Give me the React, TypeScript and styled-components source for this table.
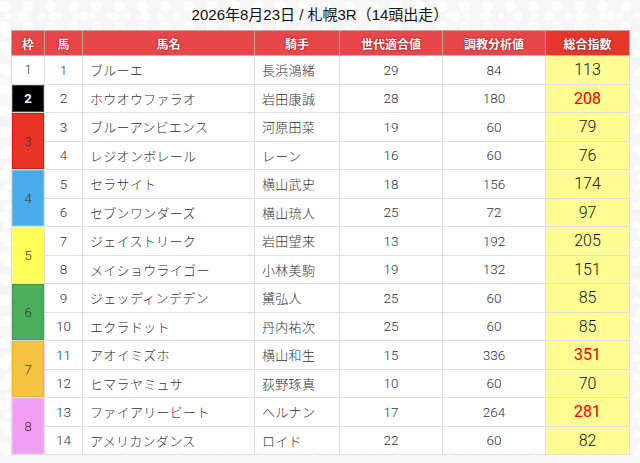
import styled, { createGlobalStyle } from "styled-components";

const GlobalStyle = createGlobalStyle`
    html, body {
        margin: 0;
        padding: 0;
    }
    body {
        background-color: #f6f6f6;
        background-image:
            radial-gradient(circle at 20% 30%, #ffffff 0 5px, transparent 6px),
            radial-gradient(circle at 70% 60%, #ffffff 0 4px, transparent 5px),
            radial-gradient(circle at 45% 85%, #ffffff 0 3px, transparent 4px);
        background-size: 23px 21px, 31px 27px, 17px 19px;
        font-family: "Liberation Sans", "Noto Sans CJK JP", sans-serif;
        color: #333;
    }
`;

const Page = styled.div`
    width: 640px;
    height: 463px;
    padding: 0 11px;
    box-sizing: border-box;
    display: flex;
    flex-direction: column;
`;

const Title = styled.h1`
    margin: 0;
    height: 30px;
    line-height: 30px;
    text-align: center;
    font-size: 15px;
    font-weight: 400;
    color: #111;
`;

const Table = styled.table`
    width: 618px;
    border-collapse: collapse;
    table-layout: fixed;
    background: #fff;
    & td, & th {
        border: 1px solid #dedede;
        padding: 0;
    }
`;

const HeadCell = styled.th<{ $total?: boolean }>`
    height: 24px;
    background: ${({ $total }) => ($total ? "#e5372c" : "#e8474a")};
    border-color: #c9a3a3 !important;
    border-bottom: 1px solid #b9b9b9 !important;
    color: #fff;
    font-family: "Noto Sans CJK JP", sans-serif;
    font-size: 12px;
    font-weight: 700;
    text-shadow: 0 0 1px #8a1010, 0 0 2px #8a1010;
    text-align: center;
`;

const Row = styled.tr`
    height: 28.5px;
`;

const FrameCell = styled.td<{ $bg: string; $edge: string; $fg: string }>`
    background: ${({ $bg }) => $bg};
    box-shadow: inset 0 0 0 1px ${({ $edge }) => $edge};
    color: ${({ $fg }) => $fg};
    text-align: center;
    font-family: Roboto, "Liberation Sans", sans-serif;
    font-size: 13px;
    font-weight: ${({ $fg }) => ($fg === "#fff" ? 700 : 300)};
`;

const NumCell = styled.td`
    text-align: center;
    font-family: Roboto, "Liberation Sans", sans-serif;
    font-size: 13.5px;
    font-weight: 300;
    color: #333;
`;

const NameCell = styled.td`
    padding-left: 7px !important;
    font-family: "Noto Sans CJK JP", sans-serif;
    font-size: 13px;
    font-weight: 300;
    letter-spacing: 0.3px;
    white-space: nowrap;
    overflow: hidden;
`;

const TotalCell = styled.td<{ $hot: boolean }>`
    background: #fffe94;
    text-align: center;
    font-family: Roboto, "Liberation Sans", sans-serif;
    font-size: 16px;
    font-weight: ${({ $hot }) => ($hot ? 400 : 300)};
    color: ${({ $hot }) => ($hot ? "#f00000" : "#111")};
`;

type Horse = {
    no: number;
    name: string;
    jockey: string;
    gen: number;
    train: number;
    total: number;
    hot?: boolean;
};

const frames: { bg: string; edge: string; fg: string; horses: Horse[] }[] = [
    { bg: "#ffffff", edge: "#ffffff", fg: "#333", horses: [
        { no: 1, name: "ブルーエ", jockey: "長浜鴻緒", gen: 29, train: 84, total: 113 },
    ] },
    { bg: "#000000", edge: "#444", fg: "#fff", horses: [
        { no: 2, name: "ホウオウファラオ", jockey: "岩田康誠", gen: 28, train: 180, total: 208, hot: true },
    ] },
    { bg: "#ea3327", edge: "#c81e18", fg: "#333", horses: [
        { no: 3, name: "ブルーアンビエンス", jockey: "河原田菜", gen: 19, train: 60, total: 79 },
        { no: 4, name: "レジオンボレール", jockey: "レーン", gen: 16, train: 60, total: 76 },
    ] },
    { bg: "#4babe9", edge: "#72c0f0", fg: "#333", horses: [
        { no: 5, name: "セラサイト", jockey: "横山武史", gen: 18, train: 156, total: 174 },
        { no: 6, name: "セブンワンダーズ", jockey: "横山琉人", gen: 25, train: 72, total: 97 },
    ] },
    { bg: "#fefe57", edge: "#fdfd80", fg: "#333", horses: [
        { no: 7, name: "ジェイストリーク", jockey: "岩田望来", gen: 13, train: 192, total: 205 },
        { no: 8, name: "メイショウライゴー", jockey: "小林美駒", gen: 19, train: 132, total: 151 },
    ] },
    { bg: "#4bae5b", edge: "#3d9a4c", fg: "#333", horses: [
        { no: 9, name: "ジェッディンデデン", jockey: "黛弘人", gen: 25, train: 60, total: 85 },
        { no: 10, name: "エクラドット", jockey: "丹内祐次", gen: 25, train: 60, total: 85 },
    ] },
    { bg: "#f6c343", edge: "#f0b530", fg: "#333", horses: [
        { no: 11, name: "アオイミズホ", jockey: "横山和生", gen: 15, train: 336, total: 351, hot: true },
        { no: 12, name: "ヒマラヤミュサ", jockey: "荻野琢真", gen: 10, train: 60, total: 70 },
    ] },
    { bg: "#ef9ef2", edge: "#f3b3f5", fg: "#333", horses: [
        { no: 13, name: "ファイアリービート", jockey: "ヘルナン", gen: 17, train: 264, total: 281, hot: true },
        { no: 14, name: "アメリカンダンス", jockey: "ロイド", gen: 22, train: 60, total: 82 },
    ] },
];

const widths = [33, 38, 172, 85, 103, 103, 84];
const headers = ["枠", "馬", "馬名", "騎手", "世代適合値", "調教分析値", "総合指数"];

function App() {
    return (
        <Page>
            <GlobalStyle />
            <Title>2026年8月23日 / 札幌3R（14頭出走）</Title>
            <Table>
                <colgroup>
                    {widths.map((w, i) => <col key={i} style={{ width: w }} />)}
                </colgroup>
                <thead>
                    <tr>
                        {headers.map((h, i) => (
                            <HeadCell key={h} $total={i === headers.length - 1}>{h}</HeadCell>
                        ))}
                    </tr>
                </thead>
                <tbody>
                    {frames.map((f, fi) =>
                        f.horses.map((h, hi) => (
                            <Row key={h.no}>
                                {hi === 0 && (
                                    <FrameCell rowSpan={f.horses.length} $bg={f.bg} $edge={f.edge} $fg={f.fg}>
                                        {fi + 1}
                                    </FrameCell>
                                )}
                                <NumCell>{h.no}</NumCell>
                                <NameCell>{h.name}</NameCell>
                                <NameCell>{h.jockey}</NameCell>
                                <NumCell>{h.gen}</NumCell>
                                <NumCell>{h.train}</NumCell>
                                <TotalCell $hot={!!h.hot}>{h.total}</TotalCell>
                            </Row>
                        ))
                    )}
                </tbody>
            </Table>
        </Page>
    );
}

export default App;
